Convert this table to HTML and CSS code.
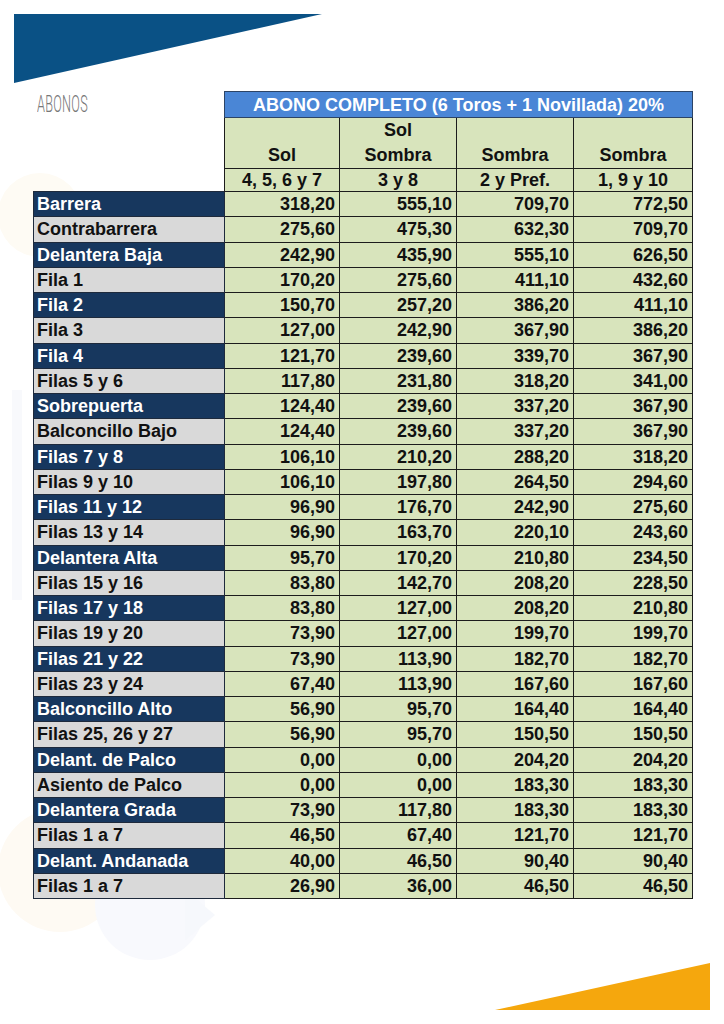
FILE: index.html
```html
<!DOCTYPE html>
<html lang="es">
<head>
<meta charset="utf-8">
<title>Abonos</title>
<link rel="stylesheet" href="styles.css">
</head>
<body>
<div class="page">
  <svg class="watermark" width="724" height="1024" viewBox="0 0 724 1024" aria-hidden="true">
    <circle cx="40" cy="215" r="42" fill="#fefbf4"/>
    <rect x="12" y="390" width="10" height="210" fill="#f8f9fc"/>
    <circle cx="60" cy="870" r="62" fill="#fefaf3"/>
    <circle cx="150" cy="905" r="55" fill="#f8f9fd"/>
    <polygon points="185,890 215,915 185,940" fill="#f6f8fc"/>
  </svg>

  <header class="top">
    <svg class="top-shape" width="308" height="69" viewBox="0 0 308 69" aria-hidden="true">
      <polygon points="0,0 308,0 0,69" fill="#0a5185"/>
    </svg>
  </header>

  <table class="prices">
    <colgroup>
      <col class="c-label"><col class="c1"><col class="c2"><col class="c3"><col class="c4">
    </colgroup>
    <thead>
      <tr class="r-title">
        <th class="blank"><span class="abonos">ABONOS</span></th>
        <th class="title" colspan="4">ABONO COMPLETO (6 Toros + 1 Novillada) 20%</th>
      </tr>
      <tr class="r-zone">
        <th class="blank"></th>
        <th class="zone">Sol</th>
        <th class="zone">Sol<br>Sombra</th>
        <th class="zone">Sombra</th>
        <th class="zone">Sombra</th>
      </tr>
      <tr class="r-tend">
        <th class="blank"></th>
        <th class="zone">4, 5, 6 y 7</th>
        <th class="zone">3 y 8</th>
        <th class="zone">2 y Pref.</th>
        <th class="zone">1, 9 y 10</th>
      </tr>
    </thead>
    <tbody>
      <tr class="dark"><th>Barrera</th><td>318,20</td><td>555,10</td><td>709,70</td><td>772,50</td></tr>
      <tr class="light"><th>Contrabarrera</th><td>275,60</td><td>475,30</td><td>632,30</td><td>709,70</td></tr>
      <tr class="dark"><th>Delantera Baja</th><td>242,90</td><td>435,90</td><td>555,10</td><td>626,50</td></tr>
      <tr class="light"><th>Fila 1</th><td>170,20</td><td>275,60</td><td>411,10</td><td>432,60</td></tr>
      <tr class="dark"><th>Fila 2</th><td>150,70</td><td>257,20</td><td>386,20</td><td>411,10</td></tr>
      <tr class="light"><th>Fila 3</th><td>127,00</td><td>242,90</td><td>367,90</td><td>386,20</td></tr>
      <tr class="dark"><th>Fila 4</th><td>121,70</td><td>239,60</td><td>339,70</td><td>367,90</td></tr>
      <tr class="light"><th>Filas 5 y 6</th><td>117,80</td><td>231,80</td><td>318,20</td><td>341,00</td></tr>
      <tr class="dark"><th>Sobrepuerta</th><td>124,40</td><td>239,60</td><td>337,20</td><td>367,90</td></tr>
      <tr class="light"><th>Balconcillo Bajo</th><td>124,40</td><td>239,60</td><td>337,20</td><td>367,90</td></tr>
      <tr class="dark"><th>Filas 7 y 8</th><td>106,10</td><td>210,20</td><td>288,20</td><td>318,20</td></tr>
      <tr class="light"><th>Filas 9 y 10</th><td>106,10</td><td>197,80</td><td>264,50</td><td>294,60</td></tr>
      <tr class="dark"><th>Filas 11 y 12</th><td>96,90</td><td>176,70</td><td>242,90</td><td>275,60</td></tr>
      <tr class="light"><th>Filas 13 y 14</th><td>96,90</td><td>163,70</td><td>220,10</td><td>243,60</td></tr>
      <tr class="dark"><th>Delantera Alta</th><td>95,70</td><td>170,20</td><td>210,80</td><td>234,50</td></tr>
      <tr class="light"><th>Filas 15 y 16</th><td>83,80</td><td>142,70</td><td>208,20</td><td>228,50</td></tr>
      <tr class="dark"><th>Filas 17 y 18</th><td>83,80</td><td>127,00</td><td>208,20</td><td>210,80</td></tr>
      <tr class="light"><th>Filas 19 y 20</th><td>73,90</td><td>127,00</td><td>199,70</td><td>199,70</td></tr>
      <tr class="dark"><th>Filas 21 y 22</th><td>73,90</td><td>113,90</td><td>182,70</td><td>182,70</td></tr>
      <tr class="light"><th>Filas 23 y 24</th><td>67,40</td><td>113,90</td><td>167,60</td><td>167,60</td></tr>
      <tr class="dark"><th>Balconcillo Alto</th><td>56,90</td><td>95,70</td><td>164,40</td><td>164,40</td></tr>
      <tr class="light"><th>Filas 25, 26 y 27</th><td>56,90</td><td>95,70</td><td>150,50</td><td>150,50</td></tr>
      <tr class="dark"><th>Delant. de Palco</th><td>0,00</td><td>0,00</td><td>204,20</td><td>204,20</td></tr>
      <tr class="light"><th>Asiento de Palco</th><td>0,00</td><td>0,00</td><td>183,30</td><td>183,30</td></tr>
      <tr class="dark"><th>Delantera Grada</th><td>73,90</td><td>117,80</td><td>183,30</td><td>183,30</td></tr>
      <tr class="light"><th>Filas 1 a 7</th><td>46,50</td><td>67,40</td><td>121,70</td><td>121,70</td></tr>
      <tr class="dark"><th>Delant. Andanada</th><td>40,00</td><td>46,50</td><td>90,40</td><td>90,40</td></tr>
      <tr class="light"><th>Filas 1 a 7</th><td>26,90</td><td>36,00</td><td>46,50</td><td>46,50</td></tr>
    </tbody>
  </table>

  <footer class="bottom">
    <svg class="bottom-shape" width="215" height="47" viewBox="0 0 215 47" aria-hidden="true">
      <polygon points="0,47 215,0 215,47" fill="#f5a70d"/>
    </svg>
  </footer>
</div>
</body>
</html>
```

FILE: styles.css
```css
* { box-sizing: border-box; }

html, body {
  margin: 0;
  padding: 0;
  background: #ffffff;
}

.page {
  position: relative;
  width: 724px;
  height: 1024px;
  overflow: hidden;
  font-family: "Liberation Sans", Arial, sans-serif;
}

.watermark {
  position: absolute;
  left: 0;
  top: 0;
  z-index: 0;
}

.top {
  position: relative;
  z-index: 1;
  padding: 14px 0 0 14px;
  height: 91px;
}

.top-shape { display: block; }

.prices {
  position: relative;
  z-index: 1;
  margin-left: 33px;
  border-collapse: collapse;
  table-layout: fixed;
  width: 659px;
  font-weight: bold;
  font-size: 18px;
  color: #111;
}

.c-label { width: 191px; }
.c1 { width: 115px; }
.c2 { width: 117px; }
.c3 { width: 117px; }
.c4 { width: 119px; }

.prices th,
.prices td {
  padding: 0;
  white-space: nowrap;
}

.blank {
  background: transparent;
  border: none;
  text-align: left;
  vertical-align: top;
}

.abonos {
  display: inline-block;
  margin: 1px 0 0 3px;
  font-family: Roboto, "Liberation Sans", sans-serif;
  font-weight: 300;
  font-size: 23px;
  line-height: 23px;
  color: #777777;
  transform: scaleX(0.55);
  transform-origin: left center;
  letter-spacing: 0.5px;
}

.r-title { height: 26px; }
.title {
  background: #4a86d6;
  color: #ffffff;
  border: 1px solid #2c4466;
  text-align: center;
  vertical-align: middle;
  line-height: 24px;
}

.r-zone { height: 51px; }
.r-tend { height: 23px; }

.zone {
  background: #d8e4bc;
  border: 1.5px solid #1c1c1c;
  text-align: center;
  vertical-align: bottom;
  line-height: 25px;
}

.r-tend .zone {
  vertical-align: middle;
  line-height: 21px;
}

tbody tr { height: 25.25px; }

.prices tbody th {
  text-align: left;
  padding-left: 3px;
  border: 1.5px solid #1e2a3c;
  font-weight: bold;
  line-height: 22px;
}

tbody tr.dark th {
  background: #17375e;
  color: #ffffff;
}

tbody tr.light th {
  background: #d9d9d9;
  color: #111111;
}

.prices tbody td {
  background: #d8e4bc;
  text-align: right;
  padding-right: 4px;
  border: 1.5px solid #1c1c1c;
  line-height: 22px;
}

.bottom {
  position: relative;
  z-index: 1;
  padding: 64px 0 0 495px;
}

.bottom-shape { display: block; }
```
